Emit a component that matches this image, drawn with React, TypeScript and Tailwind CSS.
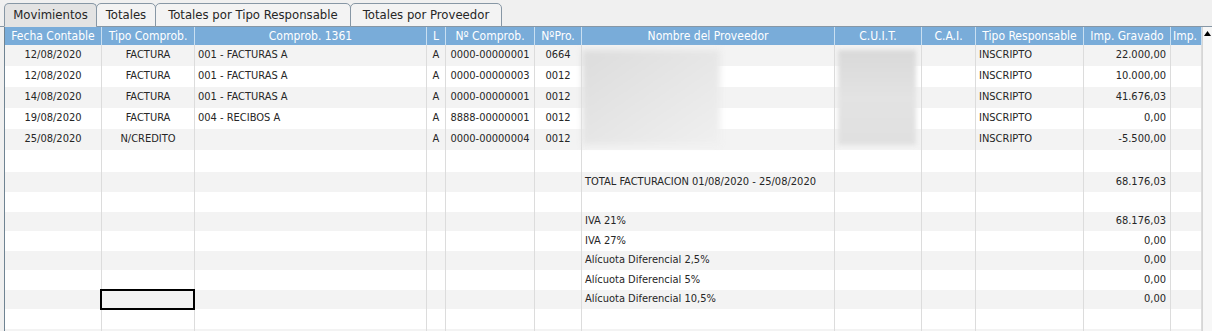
import React from 'react';

type Col = { key: string; label: string; w: string; align: string; head?: string };

const cols: Col[] = [
  { key: 'fecha', label: 'Fecha Contable', w: 'w-[97px]', align: 'justify-center' },
  { key: 'tipo', label: 'Tipo Comprob.', w: 'w-[93px]', align: 'justify-center' },
  { key: 'comp', label: 'Comprob. 1361', w: 'w-[232px]', align: 'justify-start pl-[3px]' },
  { key: 'l', label: 'L', w: 'w-[19px]', align: 'justify-center' },
  { key: 'nro', label: 'Nº Comprob.', w: 'w-[89px]', align: 'justify-center' },
  { key: 'pro', label: 'NºPro.', w: 'w-[47px]', align: 'justify-center' },
  { key: 'nombre', label: 'Nombre del Proveedor', w: 'w-[253px]', align: 'justify-start pl-[3px]' },
  { key: 'cuit', label: 'C.U.I.T.', w: 'w-[87px]', align: 'justify-center' },
  { key: 'cai', label: 'C.A.I.', w: 'w-[54px]', align: 'justify-center' },
  { key: 'resp', label: 'Tipo Responsable', w: 'w-[108px]', align: 'justify-start pl-[3px]' },
  { key: 'grav', label: 'Imp. Gravado', w: 'w-[87px]', align: 'justify-end pr-[4px]' },
  { key: 'imp', label: 'Imp.', w: 'w-[31px]', align: 'justify-end', head: 'justify-start pl-[2px]' },
];

type Row = Partial<Record<string, string>>;

const rows: Row[] = [
  { fecha: '12/08/2020', tipo: 'FACTURA', comp: '001 - FACTURAS A', l: 'A', nro: '0000-00000001', pro: '0664', resp: 'INSCRIPTO', grav: '22.000,00' },
  { fecha: '12/08/2020', tipo: 'FACTURA', comp: '001 - FACTURAS A', l: 'A', nro: '0000-00000003', pro: '0012', resp: 'INSCRIPTO', grav: '10.000,00' },
  { fecha: '14/08/2020', tipo: 'FACTURA', comp: '001 - FACTURAS A', l: 'A', nro: '0000-00000001', pro: '0012', resp: 'INSCRIPTO', grav: '41.676,03' },
  { fecha: '19/08/2020', tipo: 'FACTURA', comp: '004 - RECIBOS A', l: 'A', nro: '8888-00000001', pro: '0012', resp: 'INSCRIPTO', grav: '0,00' },
  { fecha: '25/08/2020', tipo: 'N/CREDITO', l: 'A', nro: '0000-00000004', pro: '0012', resp: 'INSCRIPTO', grav: '-5.500,00' },
  {},
  { nombre: 'TOTAL FACTURACION 01/08/2020 - 25/08/2020', grav: '68.176,03' },
  {},
  { nombre: 'IVA 21%', grav: '68.176,03' },
  { nombre: 'IVA 27%', grav: '0,00' },
  { nombre: 'Alícuota Diferencial 2,5%', grav: '0,00' },
  { nombre: 'Alícuota Diferencial 5%', grav: '0,00' },
  { nombre: 'Alícuota Diferencial 10,5%', grav: '0,00' },
  {},
  {},
];

const heights = ['h-[21px]', 'h-[21px]', 'h-[21px]', 'h-[21px]', 'h-[21px]', 'h-[22px]', 'h-[20px]', 'h-[20px]', 'h-[19px]', 'h-[20px]', 'h-[19px]', 'h-[20px]', 'h-[19px]', 'h-[20px]', 'h-[20px]'];

const tabs = [
  { label: 'Movimientos', w: 'w-[93px]', active: true },
  { label: 'Totales', w: 'w-[60px]' },
  { label: 'Totales por Tipo Responsable', w: 'w-[196px]' },
  { label: 'Totales por Proveedor', w: 'w-[152px]' },
];

export default function App() {
  return (
    <div
      className="w-[1212px] h-[331px] overflow-hidden bg-[#f0f0f0] text-[#262626]"
      style={{ fontFamily: '"DejaVu Sans Condensed", "Liberation Sans", sans-serif' }}
    >
      {/* tabs */}
      <div className="flex items-end h-[27px] pl-[4px] border-b border-[#8797a5]">
        {tabs.map((t) => (
          <div
            key={t.label}
            className={`${t.w} h-[24px] -mb-px flex items-center justify-center text-[13px] border border-[#8797a5] rounded-t-[5px] -ml-px first:ml-0 ${
              t.active ? 'bg-[#e3e3e3] border-b-[#e3e3e3]' : 'bg-[#f3f3f3]'
            }`}
          >
            {t.label}
          </div>
        ))}
      </div>

      <div className="flex">
        <div className="ml-[4px] border-l border-[#6f8392] relative">
          {/* header */}
          <div className="flex h-[18px] bg-[#79acd9] text-white text-[12px]">
            {cols.map((c) => (
              <div
                key={c.key}
                className={`${c.w} shrink-0 border-r border-[#c9dff1] flex items-center ${c.head ?? 'justify-center'} overflow-hidden whitespace-nowrap`}
              >
                {c.label}
              </div>
            ))}
          </div>

          {rows.map((r, i) => (
            <div key={i} className={`flex ${heights[i]} text-[11px] ${i % 2 === 0 ? 'bg-[#f3f3f3]' : 'bg-white'}`}>
              {cols.map((c) => {
                const sel = i === 12 && c.key === 'tipo';
                return (
                  <div
                    key={c.key}
                    className={`${c.w} shrink-0 border-r border-[#dcdcdc] flex items-center ${c.align} whitespace-nowrap relative ${
                      sel ? 'z-10' : 'overflow-hidden'
                    }`}
                  >
                    {r[c.key]}
                    {sel && <div className="absolute -left-[2px] -right-px -top-px -bottom-px border-2 border-black" />}
                  </div>
                );
              })}
            </div>
          ))}

          {/* redacted areas */}
          <div className="absolute left-[577px] top-[23px] w-[138px] h-[95px] bg-gradient-to-br from-[#dcdcdc] via-[#e6e6e6] to-[#f0f0f0] blur-[3px]" />
          <div className="absolute left-[833px] top-[23px] w-[78px] h-[95px] bg-gradient-to-b from-[#d9d9d9] via-[#e3e3e3] to-[#e0e0e0] blur-[2px]" />
        </div>

        {/* scrollbar */}
        <div className="w-[10px] bg-[#f7f7f7] border-l border-[#d6d6d6] flex justify-center pt-[4px]">
          <svg width="7" height="5" viewBox="0 0 7 5">
            <polygon points="3.5,0 7,5 0,5" fill="#000" />
          </svg>
        </div>
      </div>
    </div>
  );
}
